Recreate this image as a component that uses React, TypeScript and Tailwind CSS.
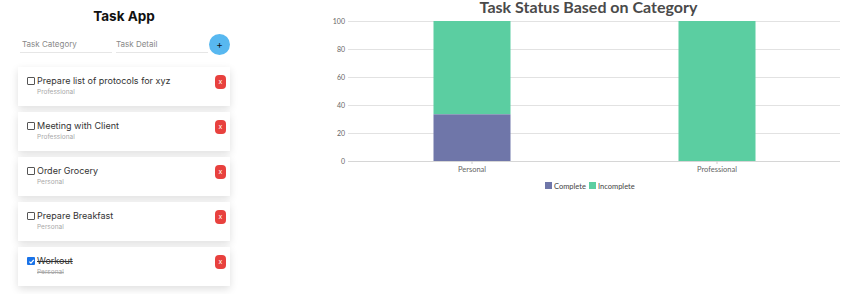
import React from "react";

type Task = { id: number; title: string; category: string; done: boolean };

const tasks: Task[] = [
  { id: 1, title: "Prepare list of protocols for xyz", category: "Professional", done: false },
  { id: 2, title: "Meeting with Client", category: "Professional", done: false },
  { id: 3, title: "Order Grocery", category: "Personal", done: false },
  { id: 4, title: "Prepare Breakfast", category: "Personal", done: false },
  { id: 5, title: "Workout", category: "Personal", done: true },
];

// chart data: percent complete per category
const chartData = [
  { label: "Personal", complete: 33.33, center: 168 },
  { label: "Professional", complete: 0, center: 413 },
];

const PLOT_TOP = 5;
const PLOT_BOTTOM = 145;
const PLOT_LEFT = 44;
const PLOT_RIGHT = 536;
const BAR_W = 77;

function yFor(v: number) {
  return PLOT_BOTTOM - ((PLOT_BOTTOM - PLOT_TOP) * v) / 100;
}

function TaskCard({ task }: { task: Task }) {
  return (
    <div className="flex items-start justify-between bg-white h-[39px] pl-[9px] pr-[4px] pt-[8px] shadow-[0_3px_8px_rgba(0,0,0,0.13)]">
      <div className="flex flex-col">
        <div className="flex items-center h-[12px]">
          {task.done ? (
            <span className="w-[8px] h-[8px] rounded-[1px] bg-[#1a73e8] flex items-center justify-center mr-[2px]">
              <svg viewBox="0 0 10 10" className="w-[7px] h-[7px]">
                <path d="M2 5.2 L4.2 7.4 L8.2 2.6" fill="none" stroke="white" strokeWidth="1.8" />
              </svg>
            </span>
          ) : (
            <span className="w-[8px] h-[8px] rounded-[1px] border border-[#555] bg-white mr-[2px]" />
          )}
          <span
            className={`text-[9px] text-[#333] leading-[12px] ${task.done ? "line-through" : ""}`}
          >
            {task.title}
          </span>
        </div>
        <span
          className={`pl-[10px] mt-[1px] text-[6.5px] leading-[9px] text-[#a8a8a8] ${
            task.done ? "line-through" : ""
          }`}
        >
          {task.category}
        </span>
      </div>
      <button className="w-[11px] h-[14px] rounded-[4px] bg-[#e8413e] text-white text-[7px] leading-[14px] text-center">
        x
      </button>
    </div>
  );
}

export default function App() {
  return (
    <div className="flex w-[850px] h-[294px] bg-white overflow-hidden" style={{ fontFamily: "Inter, sans-serif" }}>
      {/* Task app */}
      <div className="w-[304px] shrink-0 pl-[18px]">
        <div className="w-[212px] flex flex-col">
          <h1 className="pt-[6px] h-[26px] text-center text-[13.5px] leading-[20px] font-bold text-[#111]">
            Task App
          </h1>
          <div className="flex items-center mt-[8px] h-[20px]">
            <div className="w-[92px] ml-[2px] border-b border-[#e6e6e6] h-[17px] flex items-center">
              <span className="text-[8px] text-[#888] pl-[2px]">Task Category</span>
            </div>
            <div className="w-[92px] ml-[4px] border-b border-[#e6e6e6] h-[17px] flex items-center">
              <span className="text-[8px] text-[#888]">Task Detail</span>
            </div>
            <button className="ml-auto w-[21px] h-[21px] rounded-full bg-[#58b8f0] text-[#111] text-[10px] leading-[21px] text-center">
              +
            </button>
          </div>
          <div className="flex flex-col gap-[6px] mt-[13px]">
            {tasks.map((t) => (
              <TaskCard key={t.id} task={t} />
            ))}
          </div>
        </div>
      </div>

      {/* Chart */}
      <div className="w-[546px] shrink-0 flex flex-col" style={{ fontFamily: "Lato, sans-serif" }}>
        <h2 className="-mt-[3px] h-[19px] pl-[23px] text-center text-[16px] leading-[19px] font-bold text-[#4a4a4a]">
          Task Status Based on Category
        </h2>
        <svg width="546" height="180" viewBox="0 0 546 180" className="block">
          {[0, 20, 40, 60, 80, 100].map((v) => (
            <g key={v}>
              <line
                x1={PLOT_LEFT}
                x2={PLOT_RIGHT}
                y1={yFor(v) + 0.5}
                y2={yFor(v) + 0.5}
                stroke={v === 0 ? "#d6d6d6" : "#e2e2e2"}
                strokeWidth="1"
              />
              <text x={41} y={yFor(v) + 2.5} textAnchor="end" fontSize="7" fill="#666">
                {v}
              </text>
            </g>
          ))}
          {chartData.map((d) => {
            const x = d.center - BAR_W / 2;
            const yc = yFor(d.complete);
            return (
              <g key={d.label}>
                <rect x={x} y={PLOT_TOP} width={BAR_W} height={yc - PLOT_TOP} fill="#5bcea1" />
                {d.complete > 0 && (
                  <rect x={x} y={yc} width={BAR_W} height={PLOT_BOTTOM - yc} fill="#6f76a9" />
                )}
                <line x1={d.center} x2={d.center} y1={PLOT_BOTTOM} y2={PLOT_BOTTOM + 3} stroke="#ccc" />
                <text x={d.center} y={PLOT_BOTTOM + 11} textAnchor="middle" fontSize="7.5" fill="#666">
                  {d.label}
                </text>
              </g>
            );
          })}
          {/* legend */}
          <rect x={241} y={166} width={7} height={7} fill="#6f76a9" />
          <text x={250} y={172.5} fontSize="7.5" fill="#444">
            Complete
          </text>
          <rect x={285} y={166} width={7} height={7} fill="#5bcea1" />
          <text x={294} y={172.5} fontSize="7.5" fill="#444">
            Incomplete
          </text>
        </svg>
      </div>
    </div>
  );
}
